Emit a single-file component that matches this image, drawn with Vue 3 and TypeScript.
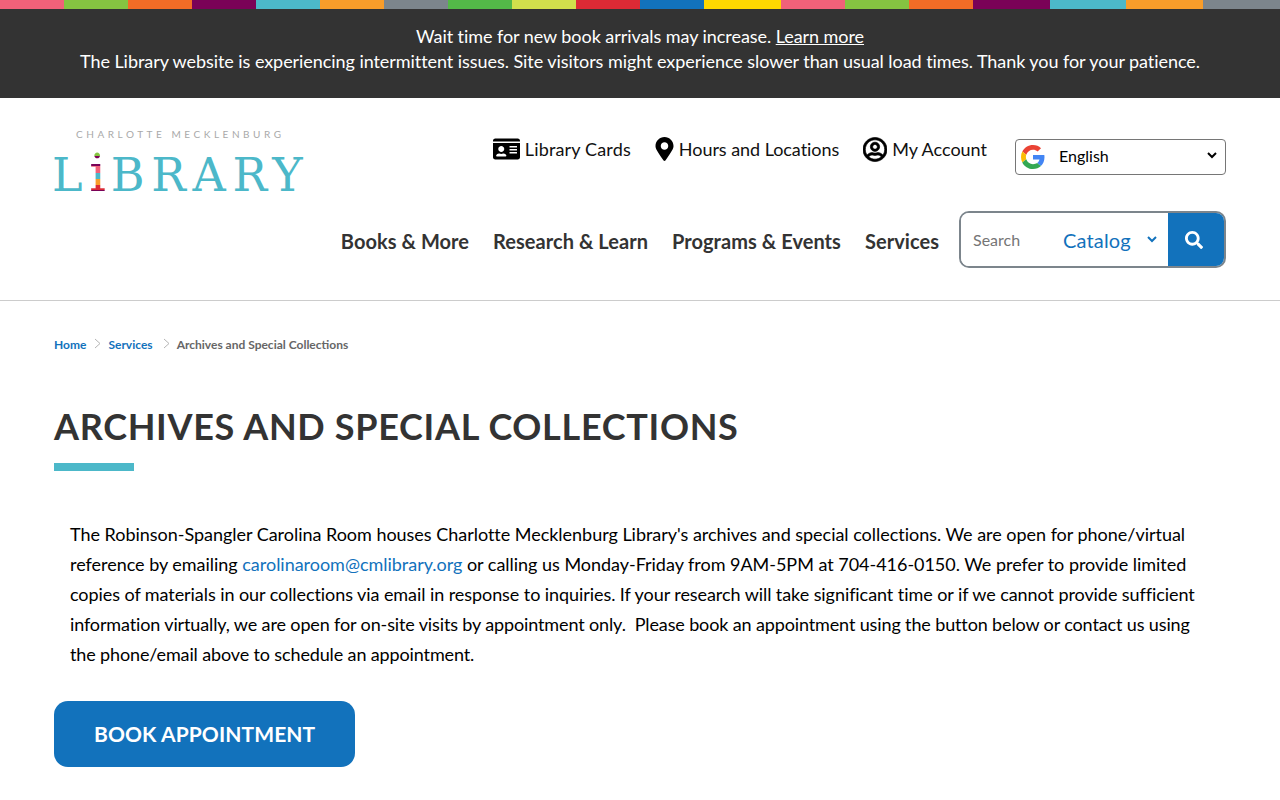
<script setup lang="ts">
interface Stripe {
  color: string
  width: number
}

const palette = ['#f16179', '#85c441', '#f36c26', '#7a0257', '#4cb8c9', '#f99d2a', '#7c858c', '#53b848', '#d1e04c', '#dc2a35', '#1272bc']
const stripes: Stripe[] = [
  ...palette.map((color) => ({ color, width: 5 })),
  { color: '#ffd800', width: 6 },
  { color: '#f16179', width: 5 },
  { color: '#85c441', width: 5 },
  { color: '#f36c26', width: 5 },
  { color: '#7a0257', width: 6 },
  { color: '#4cb8c9', width: 6 },
  { color: '#f99d2a', width: 6 },
  { color: '#7c858c', width: 6 }
]

const navItems = ['Books & More', 'Research & Learn', 'Programs & Events', 'Services']
</script>

<template>
  <div class="page">
    <div class="stripes">
      <span
        v-for="(s, i) in stripes"
        :key="i"
        :style="{ background: s.color, width: s.width + '%' }"
      ></span>
    </div>
    <div class="alert">
      <p>Wait time for new book arrivals may increase. <a href="#">Learn more</a></p>
      <p>The Library website is experiencing intermittent issues. Site visitors might experience slower than usual load times. Thank you for your patience.</p>
    </div>

    <header class="header">
      <a class="logo" href="#">
        <span class="logo-top">CHARLOTTE MECKLENBURG</span>
        <span class="logo-main">L<span class="logo-i">i</span>BRARY</span>
      </a>
      <div class="header-right">
        <div class="utility">
          <a href="#" class="util-link cards">
            <svg width="27" height="24" viewBox="0 0 576 512">
              <path d="M528 32H48C21.500 32 0 53.500 0 80v16h576V80c0-26.500-21.500-48-48-48zM0 432c0 26.500 21.500 48 48 48h480c26.500 0 48-21.500 48-48V128H0v304zm352-232c0-4.400 3.600-8 8-8h144c4.400 0 8 3.600 8 8v16c0 4.400-3.600 8-8 8H360c-4.400 0-8-3.600-8-8v-16zm0 64c0-4.400 3.600-8 8-8h144c4.400 0 8 3.600 8 8v16c0 4.400-3.600 8-8 8H360c-4.400 0-8-3.600-8-8v-16zm0 64c0-4.400 3.600-8 8-8h144c4.400 0 8 3.600 8 8v16c0 4.400-3.600 8-8 8H360c-4.400 0-8-3.600-8-8v-16zM176 192c35.300 0 64 28.700 64 64s-28.700 64-64 64-64-28.700-64-64 28.700-64 64-64zM67.100 396.200C75.500 370.500 99.600 352 128 352h8.200c12.300 5.100 25.700 8 39.800 8s27.600-2.900 39.800-8h8.200c28.400 0 52.500 18.500 60.900 44.200 3.200 9.900-5.200 19.800-15.600 19.800H82.700c-10.400 0-18.800-10-15.600-19.800z" fill="#000" />
            </svg>
            Library Cards
          </a>
          <a href="#" class="util-link hours">
            <svg width="19" height="24" viewBox="0 0 384 512">
              <path d="M172.268 501.670C26.970 291.031 0 252.678 0 192 0 85.961 85.961 0 192 0s192 85.961 192 192c0 60.678-26.970 99.031-172.268 309.670-9.535 13.774-29.930 13.773-39.464 0zM192 272c44.183 0 80-35.817 80-80s-35.817-80-80-80-80 35.817-80 80 35.817 80 80 80z" fill="#000" />
            </svg>
            Hours and Locations
          </a>
          <a href="#" class="util-link">
            <svg width="24" height="25" viewBox="0 0 496 512">
              <path d="M248 104c-53 0-96 43-96 96s43 96 96 96 96-43 96-96-43-96-96-96zm0 144c-26.500 0-48-21.500-48-48s21.500-48 48-48 48 21.500 48 48-21.500 48-48 48zm0-240C111 8 0 119 0 256s111 248 248 248 248-111 248-248S385 8 248 8zm0 448c-49.700 0-95.100-18.300-130.100-48.400 14.900-23 40.400-38.600 69.600-39.500 20.800 6.400 40.600 9.600 60.500 9.600s39.700-3.100 60.500-9.600c29.200 1 54.700 16.500 69.600 39.500-35 30.100-80.400 48.400-130.100 48.400zm162.700-84.100c-24.400-31.400-62.100-51.900-105.100-51.900-10.200 0-26 9.600-57.600 9.600-31.500 0-47.400-9.600-57.600-9.600-42.900 0-80.600 20.500-105.100 51.900C61.900 339.200 48 299.200 48 256c0-110.300 89.700-200 200-200s200 89.700 200 200c0 43.200-13.900 83.200-37.300 115.900z" fill="#000" stroke="#000" stroke-width="14" />
            </svg>
            My Account
          </a>
          <div class="translate">
            <svg class="g-icon" width="24" height="24" viewBox="0 0 48 48">
              <path fill="#EA4335" d="M24 9.500c3.540 0 6.710 1.220 9.210 3.600l6.850-6.850C35.900 2.380 30.470 0 24 0 14.620 0 6.510 5.380 2.560 13.220l7.980 6.190C12.430 13.720 17.740 9.500 24 9.500z" />
              <path fill="#4285F4" d="M46.980 24.550c0-1.570-.15-3.090-.38-4.550H24v9.020h12.940c-.58 2.960-2.260 5.480-4.780 7.180l7.730 6c4.510-4.180 7.090-10.360 7.090-17.650z" />
              <path fill="#FBBC05" d="M10.530 28.590c-.48-1.450-.76-2.990-.76-4.590s.27-3.140.76-4.590l-7.980-6.190C.92 16.460 0 20.120 0 24c0 3.880.92 7.540 2.560 10.780l7.970-6.190z" />
              <path fill="#34A853" d="M24 48c6.480 0 11.930-2.130 15.890-5.810l-7.730-6c-2.150 1.450-4.920 2.300-8.160 2.300-6.260 0-11.570-4.220-13.470-9.910l-7.980 6.190C6.510 42.620 14.620 48 24 48z" />
            </svg>
            <select>
              <option>English</option>
            </select>
            <svg class="select-arrow" width="10" height="7" viewBox="0 0 10 7">
              <path d="M1 1l4 4 4-4" fill="none" stroke="#000" stroke-width="2" />
            </svg>
          </div>
        </div>
        <div class="nav-row">
          <nav class="nav">
            <a v-for="item in navItems" :key="item" href="#">{{ item }}</a>
          </nav>
          <form class="search" @submit.prevent>
            <input type="text" placeholder="Search" />
            <span class="scope">
              Catalog
              <svg width="10" height="7" viewBox="0 0 10 7">
                <path d="M1 1l4 4 4-4" fill="none" stroke="#1272bc" stroke-width="2" />
              </svg>
            </span>
            <button type="submit" aria-label="Search">
              <svg width="18" height="18" viewBox="0 0 512 512">
                <path d="M505 442.700L405.300 343c-4.500-4.500-10.600-7-17-7H372c27.600-35.300 44-79.700 44-128C416 93.100 322.900 0 208 0S0 93.100 0 208s93.100 208 208 208c48.300 0 92.700-16.400 128-44v16.300c0 6.400 2.500 12.500 7 17l99.700 99.700c9.400 9.400 24.600 9.400 33.900 0l28.300-28.300c9.400-9.400 9.400-24.600.1-34zM208 336c-70.700 0-128-57.200-128-128 0-70.700 57.200-128 128-128 70.700 0 128 57.200 128 128 0 70.700-57.200 128-128 128z" fill="#fff" />
              </svg>
            </button>
          </form>
        </div>
      </div>
    </header>

    <main class="content">
      <ol class="crumbs">
        <li><a href="#">Home</a></li>
        <li class="sep"><svg width="7" height="11" viewBox="0 0 7 11"><path d="M1 1l5 4.500-5 4.500" fill="none" stroke="#b5b5b5" /></svg></li>
        <li><a href="#">Services</a></li>
        <li class="sep"><svg width="7" height="11" viewBox="0 0 7 11"><path d="M1 1l5 4.500-5 4.500" fill="none" stroke="#b5b5b5" /></svg></li>
        <li class="current">Archives and Special Collections</li>
      </ol>
      <h1>Archives and Special Collections</h1>
      <div class="rule"></div>
      <p class="body-text">
        <span class="fit-a">The Robinson-Spangler Carolina Room houses Charlotte Mecklenburg Library's archives and special collections. We are open for phone/virtual reference by emailing <a href="#">carolinaroom@cmlibrary.org</a> or calling us Monday-Friday from 9AM-5PM at 704-416-0150. We prefer to provide limited </span>
        <span class="fit-b">copies of materials in our collections via email in response to inquiries. If your research will take significant time or if we cannot provide sufficient </span>
        <span class="fit-c">information virtually, we are open for on-site visits by appointment only.&nbsp; Please book an appointment using the button below or contact us using the phone/email above to schedule an appointment.</span>
      </p>
      <a class="book" href="#">BOOK APPOINTMENT</a>
    </main>
  </div>
</template>

<style>
html,
body {
  margin: 0;
  background: #fff;
  overflow: hidden;
}
</style>

<style scoped>
.page {
  font-family: Lato, "Open Sans", sans-serif;
  color: #000;
  height: 800px;
  overflow: hidden;
}

a {
  text-decoration: none;
}

.stripes {
  display: flex;
  height: 9px;
}

.alert {
  background: #333;
  color: #fff;
  height: 89px;
  box-sizing: border-box;
  padding-top: 15px;
  text-align: center;
  font-size: 18px;
  letter-spacing: -0.06px;
  line-height: 25px;
}

.alert p {
  margin: 0;
}

.alert a {
  color: #fff;
  text-decoration: underline;
}

.header {
  display: flex;
  justify-content: space-between;
  height: 203px;
  box-sizing: border-box;
  padding: 0 54px;
  border-bottom: 1px solid #ccc;
}

.logo {
  display: flex;
  flex-direction: column;
  padding-top: 30px;
  width: 252px;
}

.logo-top {
  font-size: 10px;
  line-height: 12px;
  letter-spacing: 3.55px;
  color: #a9a9a9;
  padding-left: 22px;
  white-space: nowrap;
}

.logo-main {
  font-family: "DejaVu Serif", serif;
  font-size: 46px;
  line-height: 50px;
  letter-spacing: 6.7px;
  color: #4cb8c9;
  margin: 10px 0 0 -2px;
  white-space: nowrap;
}

.logo-i {
  font-size: 52px;
  line-height: 0;
  letter-spacing: 4.8px;
  background:
    linear-gradient(180deg, #85c441 0 22%, #7a0257 22% 38%, #f16179 38% 50%, #4cb8c9 50% 60%, #f99d2a 60% 70%, #dc2a35 70% 78%, #7a0257 78%);
  -webkit-background-clip: text;
  background-clip: text;
  color: transparent;
}

.header-right {
  display: flex;
  flex-direction: column;
  align-items: flex-end;
}

.utility {
  display: flex;
  align-items: flex-start;
  padding-top: 37px;
}

.util-link {
  display: flex;
  align-items: center;
  gap: 5px;
  height: 28px;
  margin-right: 24px;
  color: #111;
  font-size: 18px;
}

.util-link svg {
  flex: none;
}

.util-link.cards {
  letter-spacing: 0.15px;
}

.util-link.hours {
  letter-spacing: -0.05px;
}

.util-link:nth-child(3) {
  margin-right: 28px;
}

.translate {
  position: relative;
  margin-top: 4px;
}

.g-icon {
  position: absolute;
  left: 6px;
  top: 6px;
}

.select-arrow {
  position: absolute;
  right: 9px;
  top: 13px;
}

.translate select {
  display: block;
  appearance: none;
  width: 211px;
  height: 36px;
  box-sizing: border-box;
  padding: 0 0 3px 43px;
  border: 1px solid #767676;
  border-radius: 4px;
  background: #fff;
  color: #000;
  font-family: Lato, sans-serif;
  font-size: 16px;
}

.nav-row {
  display: flex;
  align-items: center;
  margin-top: 36px;
}

.nav {
  display: flex;
  gap: 24px;
  margin-right: 20px;
  padding-top: 2px;
}

.nav a {
  color: #333;
  font-size: 20px;
  font-weight: 700;
  letter-spacing: 0.05px;
}

.search {
  display: flex;
  width: 267px;
  height: 57px;
  box-sizing: border-box;
  border: 2px solid #7c858c;
  border-radius: 10px;
  overflow: hidden;
}

.search input {
  width: 90px;
  box-sizing: border-box;
  padding: 0 0 0 12px;
  border: 0;
  outline: 0;
  font-family: Lato, sans-serif;
  font-size: 16px;
}

.search input::placeholder {
  color: #757575;
}

.scope {
  flex: 1;
  display: flex;
  align-items: center;
  justify-content: space-between;
  padding: 0 11px 0 12px;
  color: #1272bc;
  font-size: 20px;
  letter-spacing: 0.15px;
}

.search button {
  flex: none;
  width: 56px;
  border: 0;
  padding: 0 4px 0 0;
  background: #1272bc;
  display: flex;
  align-items: center;
  justify-content: center;
}

.content {
  padding: 36px 54px 0;
}

.crumbs {
  list-style: none;
  margin: 0;
  padding: 0;
  display: flex;
  align-items: center;
  font-size: 12px;
  line-height: 16px;
  font-weight: 700;
}

.crumbs a {
  color: #1272bc;
}

.crumbs .sep {
  display: flex;
  padding: 0 7px 3px 8px;
}

.crumbs .sep:nth-child(4) {
  padding-left: 10px;
}

.crumbs .current {
  color: #666;
}

h1 {
  margin: 51px 0 0;
  font-size: 36px;
  line-height: 44px;
  font-weight: 700;
  letter-spacing: 0.69px;
  color: #333;
  text-transform: uppercase;
}

.rule {
  width: 80px;
  height: 8px;
  margin-top: 15px;
  background: #4cb8c9;
}

.body-text {
  margin: 48px 0 0;
  padding: 0 16px;
  font-size: 18px;
  line-height: 30px;
}

.body-text a {
  color: #1272bc;
}

.fit-a {
  letter-spacing: -0.025px;
}

.fit-b {
  letter-spacing: -0.07px;
}

.fit-c {
  letter-spacing: -0.13px;
}

.book {
  display: inline-block;
  margin-top: 32px;
  width: 301px;
  box-sizing: border-box;
  padding-left: 40px;
  height: 66px;
  line-height: 66px;
  border-radius: 14px;
  background: #1272bc;
  color: #fff;
  font-size: 21px;
  font-weight: 700;
  letter-spacing: 0.09px;
}
</style>
